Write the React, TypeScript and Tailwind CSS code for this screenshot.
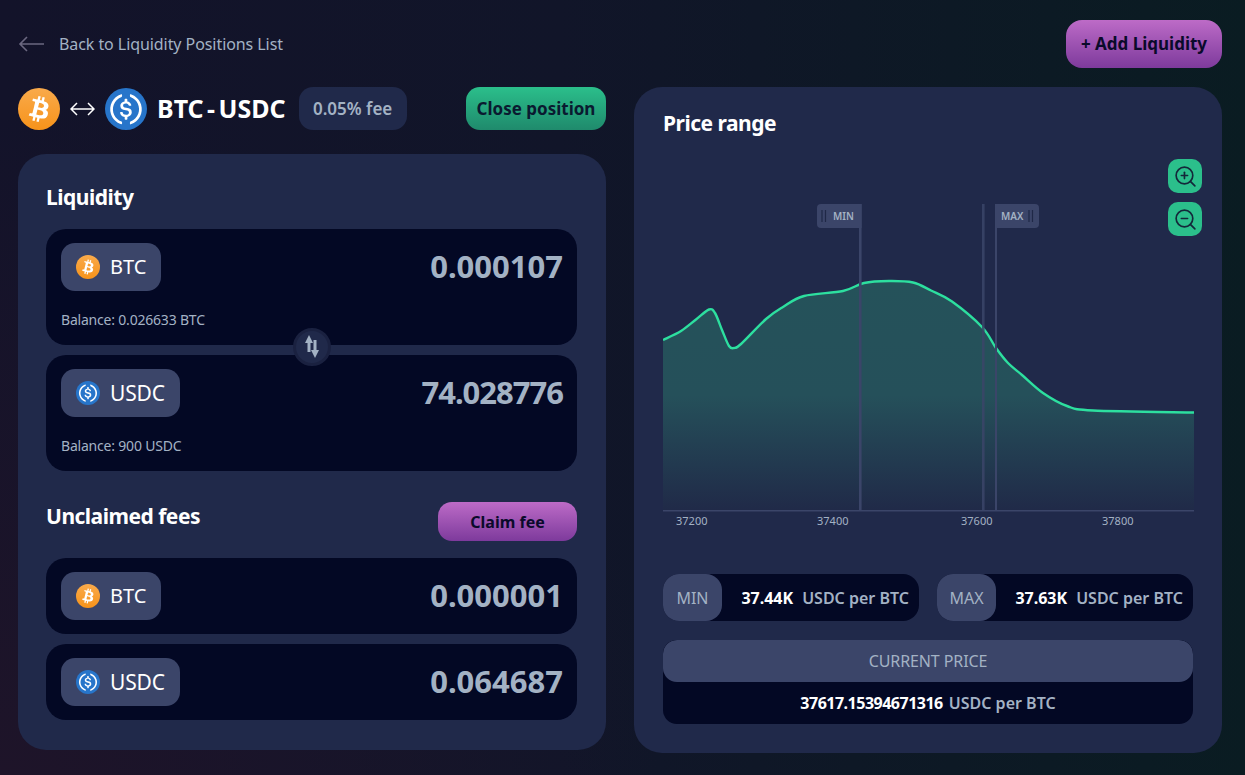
import { ZoomIn, ZoomOut } from "lucide-react";

const font = "font-['Noto_Sans',sans-serif]";

// curve points read off the chart, x/y in svg coords
const curve: [number, number][] = [
  [0, 190], [18, 181], [33, 169.5], [46, 159.5], [52, 163], [59, 180], [66, 196], [71, 198],
  [78, 194], [103, 169], [120, 157], [141, 146], [180, 141], [201, 133], [226, 131],
  [250, 132.5], [268, 140.5], [289, 151.5], [319, 177], [333, 198], [345, 213], [359, 225],
  [380, 243], [404, 256], [430, 260.5], [531, 262.5],
];

function toPath(pts: [number, number][]) {
  let d = `M${pts[0][0]} ${pts[0][1]}`;
  for (let i = 0; i < pts.length - 1; i++) {
    const p0 = pts[Math.max(i - 1, 0)];
    const p1 = pts[i];
    const p2 = pts[i + 1];
    const p3 = pts[Math.min(i + 2, pts.length - 1)];
    const c1x = p1[0] + (p2[0] - p0[0]) / 6;
    const c1y = p1[1] + (p2[1] - p0[1]) / 6;
    const c2x = p2[0] - (p3[0] - p1[0]) / 6;
    const c2y = p2[1] - (p3[1] - p1[1]) / 6;
    d += ` C${c1x} ${c1y} ${c2x} ${c2y} ${p2[0]} ${p2[1]}`;
  }
  return d;
}

function BtcIcon({ size }: { size: string }) {
  return (
    <svg viewBox="0 0 32 32" className={size}>
      <defs>
        <linearGradient id="btcg" x1="0" y1="0" x2="0" y2="1">
          <stop offset="0" stopColor="#f9aa4b" />
          <stop offset="1" stopColor="#f7931a" />
        </linearGradient>
      </defs>
      <circle cx="16" cy="16" r="16" fill="url(#btcg)" />
      <path
        fill="#fff"
        d="M23.189 14.02c.314-2.096-1.283-3.223-3.465-3.975l.708-2.84-1.728-.43-.69 2.765c-.454-.114-.92-.22-1.385-.326l.695-2.783L15.596 6l-.708 2.839c-.376-.086-.746-.17-1.104-.26l.002-.009-2.384-.595-.46 1.846s1.283.294 1.256.312c.7.175.826.638.805 1.006l-.806 3.235c.048.012.11.03.18.057l-.183-.045-1.13 4.532c-.086.212-.303.531-.793.41.018.025-1.256-.313-1.256-.313l-.858 1.978 2.25.561c.418.105.828.215 1.231.318l-.715 2.872 1.727.43.708-2.84c.472.127.93.245 1.378.357l-.706 2.828 1.728.43.715-2.866c2.948.558 5.164.333 6.097-2.333.752-2.146-.037-3.385-1.588-4.192 1.13-.26 1.98-1.003 2.207-2.538zm-3.95 5.538c-.533 2.147-4.148.986-5.32.695l.95-3.805c1.172.293 4.929.872 4.37 3.11zm.535-5.569c-.487 1.953-3.495.96-4.47.717l.86-3.45c.975.243 4.118.696 3.61 2.733z"
      />
    </svg>
  );
}

function UsdcIcon({ size }: { size: string }) {
  return (
    <svg viewBox="0 0 2000 2000" className={size}>
      <circle cx="1000" cy="1000" r="1000" fill="#2775ca" />
      <path
        fill="#fff"
        d="M1275 1158.33c0-145.83-87.5-195.83-262.5-216.66-125-16.67-150-50-150-108.34s41.67-95.83 125-95.83c75 0 116.67 25 137.5 87.5 4.17 12.5 16.67 20.83 29.17 20.83h66.66c16.67 0 29.17-12.5 29.17-29.16v-4.17c-16.67-91.67-91.67-162.5-187.5-170.83v-100c0-16.67-12.5-29.17-33.33-33.34h-62.5c-16.67 0-29.17 12.5-33.34 33.34v95.83c-125 16.67-204.16 100-204.16 204.17 0 137.5 83.33 191.66 258.33 212.5 116.67 20.83 154.17 45.83 154.17 112.5s-58.34 112.5-137.5 112.5c-108.34 0-145.84-45.84-158.34-108.34-4.16-16.66-16.66-25-29.16-25h-70.84c-16.66 0-29.16 12.5-29.16 29.17v4.17c16.66 104.16 83.33 179.16 220.83 200v100c0 16.66 12.5 29.16 33.33 33.33h62.5c16.67 0 29.17-12.5 33.34-33.33v-100c125-20.84 208.33-108.34 208.33-220.84z"
      />
      <path
        fill="#fff"
        d="M787.5 1595.83c-325-116.66-491.67-479.16-370.83-800 62.5-175 200-308.33 370.83-370.83 16.67-8.33 25-20.83 25-41.67V325c0-16.67-8.33-29.17-25-33.33-4.17 0-12.5 0-16.67 4.16-395.83 125-612.5 545.84-487.5 941.67 75 233.33 254.17 412.5 487.5 487.5 16.67 8.33 33.34 0 37.5-16.67 4.17-4.16 4.17-8.33 4.17-16.66v-58.34c0-12.5-12.5-29.16-25-37.5zM1229.17 295.83c-16.67-8.33-33.34 0-37.5 16.67-4.17 4.17-4.17 8.33-4.17 16.67v58.33c0 16.67 12.5 33.33 25 41.67 325 116.66 491.67 479.16 370.83 800-62.5 175-200 308.33-370.83 370.83-16.67 8.33-25 20.83-25 41.67V1700c0 16.67 8.33 29.17 25 33.33 4.17 0 12.5 0 16.67-4.16 395.83-125 612.5-545.84 487.5-941.67-75-237.5-258.34-416.67-487.5-491.67z"
      />
    </svg>
  );
}

function TokenChip({ token }: { token: "BTC" | "USDC" }) {
  return (
    <div className="flex h-12 items-center gap-[10px] rounded-[14px] bg-[#3b4569] px-[15px]">
      {token === "BTC" ? <BtcIcon size="h-6 w-6" /> : <UsdcIcon size="h-6 w-6" />}
      <span className={token === "BTC" ? "text-[20px] leading-none text-white" : "text-[21px] leading-none tracking-[-0.15px] text-white"}>
        {token}
      </span>
    </div>
  );
}

function AmountBox({ token, value, balance, tight }: { token: "BTC" | "USDC"; value: string; balance: string; tight?: boolean }) {
  return (
    <div className="flex h-[116px] flex-col justify-between rounded-[20px] bg-[#030824] pb-[15px] pl-[15px] pr-[14px] pt-[14px]">
      <div className="flex items-center justify-between">
        <TokenChip token={token} />
        <span className={tight ? "-mt-[2px] text-[31px] font-bold tracking-[-1px] text-[#a3b2c4]" : "-mt-[2px] text-[31px] font-bold text-[#a3b2c4]"}>
          {value}
        </span>
      </div>
      <p className="text-[14px] leading-5 tracking-[-0.2px] text-[#a3b2c4]">Balance: {balance}</p>
    </div>
  );
}

function FeeBox({ token, value }: { token: "BTC" | "USDC"; value: string }) {
  return (
    <div className="flex h-[76px] items-center justify-between rounded-[20px] bg-[#030824] pl-[15px] pr-[14px]">
      <TokenChip token={token} />
      <span className="-mt-[2px] text-[31px] font-bold text-[#a3b2c4]">{value}</span>
    </div>
  );
}

function RangeValue({ label, value }: { label: string; value: string }) {
  return (
    <div className="flex h-[47px] flex-1 items-center justify-between rounded-[16px] bg-[#030824] pr-[10px]">
      <span className="flex h-full w-[59px] items-center justify-center rounded-[16px] bg-[#3b4569] text-[16px] text-[#a3b2c4]">
        {label}
      </span>
      <span className="text-[16px]">
        <span className="font-bold text-white">{value}</span>
        <span className="ml-[9px] font-semibold text-[#a3b2c4]">USDC per BTC</span>
      </span>
    </div>
  );
}

function PriceChart() {
  const line = toPath(curve);
  return (
    <div className="relative mt-[12px] h-[392px]">
      <svg viewBox="0 0 531 392" className="h-[392px] w-[531px]">
        <defs>
          <linearGradient id="area" x1="0" y1="0" x2="0" y2="1">
            <stop offset="0" stopColor="#25525a" />
            <stop offset="0.5" stopColor="#25505a" />
            <stop offset="1" stopColor="#202a48" />
          </linearGradient>
        </defs>
        <path d={`${line} L531 360 L0 360 Z`} fill="url(#area)" />
        <path d={line} fill="none" stroke="#2ddf9f" strokeWidth="2.4" />
        <rect x="0" y="360" width="531" height="1.5" fill="#3b4569" />
        <rect x="196" y="54" width="2.6" height="306" fill="#3b4569" />
        <rect x="319" y="54" width="2.6" height="306" fill="#3b4569" fillOpacity="0.85" />
        <rect x="332" y="54" width="2" height="306" fill="#3b4569" />
        <path d="M198.6 54H158a4 4 0 0 0-4 4v16a4 4 0 0 0 4 4h40.6Z" fill="#3b4569" />
        <path d="M332 54h40a4 4 0 0 1 4 4v16a4 4 0 0 1-4 4h-40Z" fill="#3b4569" />
        <path d="M159 60v12M162.500 60v12M366 60v12M369.500 60v12" stroke="#1f2847" strokeWidth="1.200" />
        <text x="170" y="70" fontSize="10" fontWeight="600" fill="#a3b2c4">MIN</text>
        <text x="338" y="70" fontSize="10" fontWeight="600" fill="#a3b2c4">MAX</text>
        {[["37200", 13], ["37400", 154], ["37600", 298], ["37800", 439]].map(([t, x]) => (
          <text key={t} x={x} y="375" fontSize="11" fill="#a3b2c4">{t}</text>
        ))}
      </svg>
      <div className="absolute right-[-9px] top-[9px] flex flex-col gap-[9px]">
        <button type="button" className="flex h-[34px] w-[34px] items-center justify-center rounded-[10px] bg-[#2bbf8b] text-[#14283a]">
          <ZoomIn size={25} strokeWidth={1.6} />
        </button>
        <button type="button" className="flex h-[34px] w-[34px] items-center justify-center rounded-[10px] bg-[#2bbf8b] text-[#14283a]">
          <ZoomOut size={25} strokeWidth={1.6} />
        </button>
      </div>
    </div>
  );
}

export default function App() {
  return (
    <div className={`${font} h-[775px] w-[1245px] overflow-hidden bg-[radial-gradient(circle_at_0%_100%,#1e1429_0%,transparent_45%),linear-gradient(90deg,#13132a_0%,#111529_45%,#0a1c22_100%)] pl-[18px] pr-[23px] pt-5`}>
      <div className="flex h-12 items-center justify-between">
        <a className="flex items-center gap-[14px] text-[16px] tracking-[-0.07px] text-[#a3b2c4]">
          <svg viewBox="0 0 27 16" className="h-4 w-[27px]" fill="none" stroke="#6b6880" strokeWidth="1.600">
            <path d="M26 8H2M9 1 2 8l7 7" />
          </svg>
          Back to Liquidity Positions List
        </a>
        <button type="button" className="h-12 w-[156px] rounded-[16px] bg-gradient-to-b from-[#bd6bc7] to-[#7e3a9c] text-[17px] font-bold text-[#0a0a2a]">
          + Add Liquidity
        </button>
      </div>

      <div className="mt-[19px] grid grid-cols-2 gap-7">
        <div>
          <div className="flex h-[43px] items-center">
            <BtcIcon size="h-[42px] w-[42px]" />
            <svg viewBox="0 0 25 14" className="mx-[10px] h-[14px] w-[25px]" fill="none" stroke="#fff" strokeWidth="1.500">
              <path d="M1 7h23M7 1 1 7l6 6M18 1l6 6-6 6" />
            </svg>
            <UsdcIcon size="h-[42px] w-[42px]" />
            <span className="ml-[10px] text-[25px] font-bold text-white [word-spacing:-3px]">BTC - USDC</span>
            <span className="ml-[13px] flex h-[43px] w-[108px] items-center justify-center rounded-[14px] bg-[#20294a] text-[17px] font-semibold text-[#a3b2c4]">
              0.05% fee
            </span>
            <button type="button" className="ml-auto h-[43px] w-[140px] rounded-[14px] bg-gradient-to-b from-[#2bbf8b] to-[#1f8a6c] text-[17px] font-bold text-[#0a1a30]">
              Close position
            </button>
          </div>

          <section className="mt-6 h-[596px] rounded-[28px] bg-[#20294a] pl-[28px] pr-[29px] pt-[28px]">
            <h2 className="text-[21px] font-bold leading-[30px] tracking-[-0.5px] text-white">Liquidity</h2>
            <div className="relative mt-[17px] flex flex-col gap-[10px]">
              <AmountBox token="BTC" value="0.000107" balance="0.026633 BTC" />
              <AmountBox token="USDC" value="74.028776" balance="900 USDC" tight />
              <div className="absolute left-[247px] top-[99px] flex h-[38px] w-[38px] items-center justify-center rounded-full border-[3px] border-[#1a2140] bg-[#20294a]">
                <svg viewBox="0 0 20 26" className="h-[26px] w-[20px]" fill="#a3b2c4">
                  <path d="M7 1 3 9h2.500v9h3V9H11zM13 24l4-8h-2.500V6h-3v10H9z" />
                </svg>
              </div>
            </div>
            <div className="mt-[31px] flex items-start justify-between">
              <h2 className="mt-[-1px] text-[21px] font-bold leading-[30px] tracking-[-0.5px] text-white">Unclaimed fees</h2>
              <button type="button" className="h-[39px] w-[139px] rounded-[14px] bg-gradient-to-b from-[#bd6bc7] to-[#7e3a9c] text-[16px] font-bold text-[#0a0a2a]">
                Claim fee
              </button>
            </div>
            <div className="mt-[17px] flex flex-col gap-[10px]">
              <FeeBox token="BTC" value="0.000001" />
              <FeeBox token="USDC" value="0.064687" />
            </div>
          </section>
        </div>

        <section className="h-[666px] rounded-[28px] bg-[#20294a] px-[29px] pt-[21px]">
          <h2 className="text-[21px] font-bold leading-[30px] tracking-[-0.5px] text-white">Price range</h2>
          <PriceChart />
          <div className="mt-[32px] flex gap-[18px]">
            <RangeValue label="MIN" value="37.44K" />
            <RangeValue label="MAX" value="37.63K" />
          </div>
          <div className="mt-[19px] overflow-hidden rounded-[14px] bg-[#030824]">
            <div className="flex h-[42px] items-center justify-center rounded-[14px] bg-[#3b4569] text-[16px] tracking-[-0.1px] text-[#a3b2c4]">
              CURRENT PRICE
            </div>
            <div className="flex h-[42px] items-center justify-center text-[16px]">
              <span className="font-bold tracking-[-0.5px] text-white">37617.15394671316</span>
              <span className="ml-[6px] font-semibold text-[#a3b2c4]">USDC per BTC</span>
            </div>
          </div>
        </section>
      </div>
    </div>
  );
}
